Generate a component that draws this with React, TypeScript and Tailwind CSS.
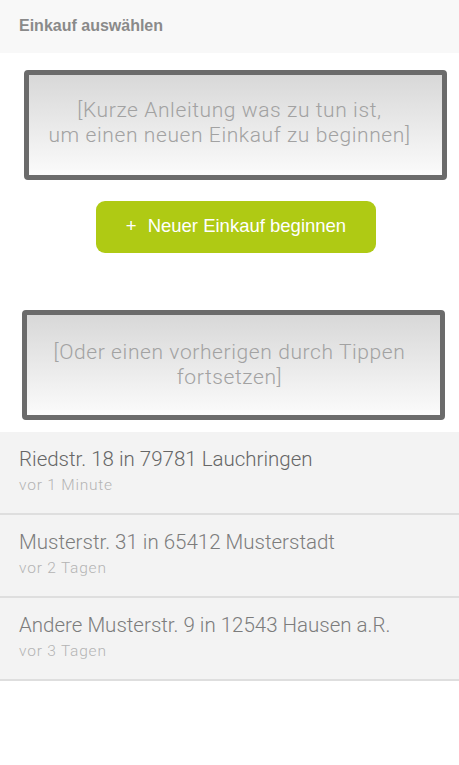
const entries = [
  { title: "Riedstr. 18 in 79781 Lauchringen", time: "vor 1 Minute", active: true },
  { title: "Musterstr. 31 in 65412 Musterstadt", time: "vor 2 Tagen", active: false },
  { title: "Andere Musterstr. 9 in 12543 Hausen a.R.", time: "vor 3 Tagen", active: false },
];

function HintBox({ children, className }: { children: React.ReactNode; className: string }) {
  return (
    <div
      className={`flex h-[110px] items-center justify-center rounded-[4px] border-[5px] border-[#6b6b6b] bg-gradient-to-b from-[#d8d8d8] to-[#fbfbfb] text-center font-['Roboto',sans-serif] text-[21px] leading-[25px] font-light tracking-[0.6px] text-[#a2a2a2] ${className}`}
    >
      {children}
    </div>
  );
}

export default function App() {
  return (
    <div className="min-h-screen w-[459px] bg-white">
      <div className="flex h-[53px] items-center bg-[#f8f8f8] px-[19px] pb-[2px] font-['Liberation_Sans',Arial,sans-serif] text-[16px] font-bold text-[#8a8a8a]">
        Einkauf auswählen
      </div>

      <div className="px-[24px] pt-[17px]">
        <HintBox className="w-[423px] pr-[12px] pb-[4px]">
          <span>
            [Kurze Anleitung was zu tun ist,
            <br />
            um einen neuen Einkauf zu beginnen]
          </span>
        </HintBox>
      </div>

      <div className="flex justify-center pt-[21px] pl-[13px]">
        <button className="flex h-[52px] w-[280px] items-center justify-center rounded-[9px] bg-[#afca14] pb-[2px] font-['Liberation_Sans',Arial,sans-serif] text-[18.5px] text-white">
          <span className="mr-[11px]">+</span>
          Neuer Einkauf beginnen
        </button>
      </div>

      <div className="px-[22px] pt-[57px]">
        <HintBox className="w-[423px] pr-[8px]">
          <span>
            [Oder einen vorherigen durch Tippen
            <br />
            fortsetzen]
          </span>
        </HintBox>
      </div>

      <div className="mt-[12px] bg-[#f3f3f3] font-['Roboto',sans-serif] font-light">
        {entries.map((e) => (
          <div key={e.title} className="h-[83px] border-b-2 border-[#dedede] px-[19px] pt-[14px]">
            <div className={`text-[20.5px] leading-[26px] ${e.active ? "text-[#666]" : "text-[#7c7c7c]"}`}>{e.title}</div>
            <div className="mt-[3px] text-[15.5px] leading-[20px] tracking-[0.8px] text-[#b4b4b4]">{e.time}</div>
          </div>
        ))}
      </div>
    </div>
  );
}
